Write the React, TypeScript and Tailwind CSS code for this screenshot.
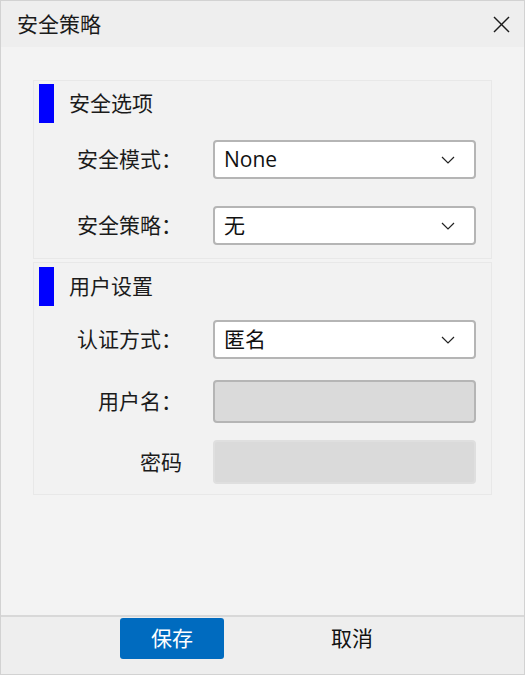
import React from "react";

const font = { fontFamily: '"Open Sans", "Noto Sans CJK SC", sans-serif' };

function Chevron() {
  return (
    <svg width="14" height="8" viewBox="0 0 14 8" fill="none">
      <polyline points="1,1 7,7 13,1" stroke="#222" strokeWidth="1.2" />
    </svg>
  );
}

function Combo({ value, mt }: { value: string; mt: string }) {
  return (
    <div className={`flex items-center ${mt}`}>
      <div className="w-[148px] text-right text-[21px] text-[#1b1b1b] leading-none">{"\u200b"}</div>
    </div>
  );
}

function Row({
  label,
  children,
  className,
}: {
  label: string;
  children: React.ReactNode;
  className: string;
}) {
  return (
    <div className={`flex items-center ${className}`}>
      <div className="w-[148px] text-right text-[21px] leading-none text-[#1b1b1b]">{label}</div>
      <div className="ml-[31px] h-full w-[263px]">{children}</div>
    </div>
  );
}

function Select({ value }: { value: string }) {
  return (
    <div className="flex h-full w-full items-center justify-between rounded-[4px] border-2 border-[#b5b5b5] bg-white pl-[9px] pr-[19px]">
      <span className="text-[21px] leading-none text-[#111]">{value}</span>
      <Chevron />
    </div>
  );
}

function Heading({ text }: { text: string }) {
  return (
    <div className="flex h-[39px] items-center">
      <div className="ml-[5px] h-[39px] w-[15px] bg-[#0000ff]" />
      <span className="ml-[15px] text-[21px] leading-none text-[#1b1b1b]">{text}</span>
    </div>
  );
}

export default function App() {
  void Combo;
  return (
    <div
      className="flex h-[675px] w-[525px] flex-col border border-[#d2d2d2] bg-[#f3f3f3]"
      style={font}
    >
      <div className="flex h-[46px] shrink-0 items-center justify-between bg-[#eeeeee] pl-4 pr-[14px]">
        <span className="text-[21px] leading-none text-[#1b1b1b]">安全策略</span>
        <svg width="17" height="17" viewBox="0 0 17 17" fill="none">
          <line x1="1" y1="1" x2="16" y2="16" stroke="#1b1b1b" strokeWidth="1.4" />
          <line x1="16" y1="1" x2="1" y2="16" stroke="#1b1b1b" strokeWidth="1.4" />
        </svg>
      </div>
      <div className="flex-1 bg-[#f3f3f3] pl-[32px] pt-[33px]">
        <div className="flex w-[459px] flex-col border border-[#e8e8e8] bg-[#f2f2f2] pb-[13px] pt-[3px]">
          <Heading text="安全选项" />
          <Row label="安全模式：" className="mt-[17px] h-[39px]">
            <Select value="None" />
          </Row>
          <Row label="安全策略：" className="mt-[27px] h-[39px]">
            <Select value="无" />
          </Row>
        </div>
        <div className="mt-[3px] flex w-[459px] flex-col border border-[#e8e8e8] bg-[#f2f2f2] pb-[10px] pt-[4px]">
          <Heading text="用户设置" />
          <Row label="认证方式：" className="mt-[14px] h-[39px]">
            <Select value="匿名" />
          </Row>
          <Row label="用户名：" className="mt-[21px] h-[43px]">
            <div className="h-full w-full rounded-[4px] border-2 border-[#b5b5b5] bg-[#dadada]" />
          </Row>
          <Row label="密码" className="mt-[17px] h-[44px]">
            <div className="h-full w-full rounded-[4px] border-2 border-[#dfdfdf] bg-[#dadada]" />
          </Row>
        </div>
      </div>
      <div className="flex h-[59px] shrink-0 items-start border-t-2 border-[#d8d8d8] bg-[#eeeeee] pt-[1px]">
        <button className="ml-[119px] flex h-[41px] w-[104px] items-center justify-center rounded-[3px] bg-[#006bbf] text-[21px] leading-none text-white">
          保存
        </button>
        <button className="ml-[76px] flex h-[41px] w-[104px] items-center justify-center text-[21px] leading-none text-[#111]">
          取消
        </button>
      </div>
    </div>
  );
}
